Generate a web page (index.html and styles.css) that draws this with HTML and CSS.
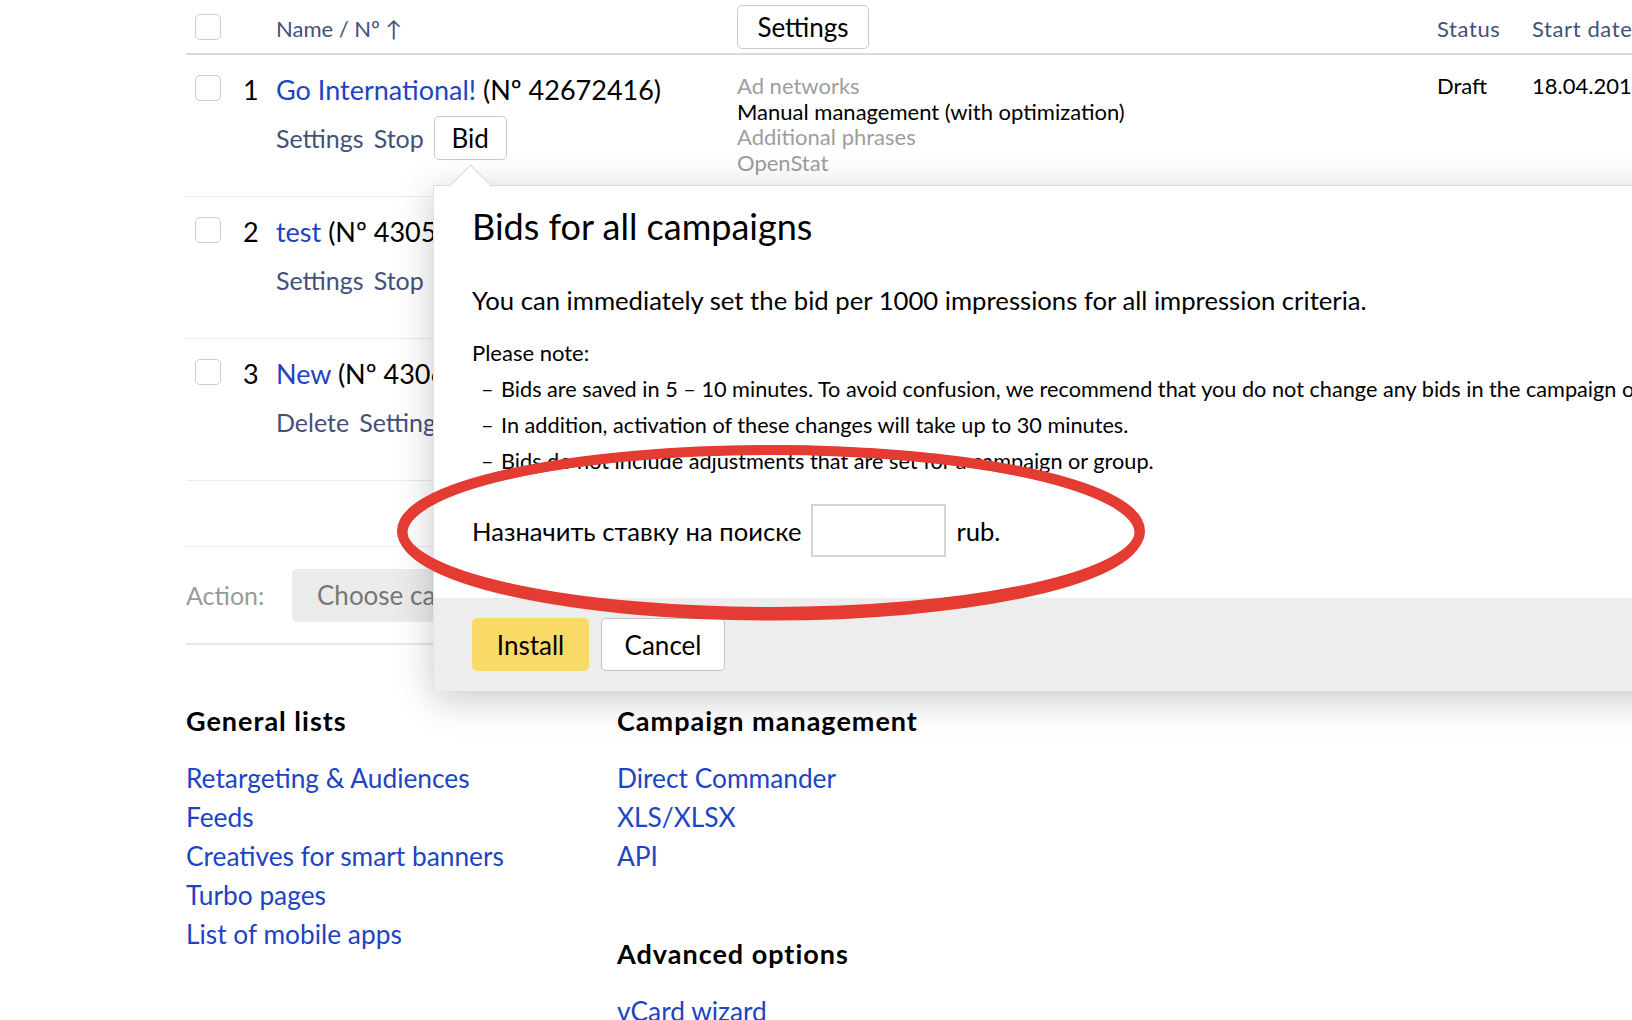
FILE: index.html
```html
<!DOCTYPE html>
<html lang="en">
<head>
<meta charset="utf-8">
<title>Campaigns</title>
<link rel="stylesheet" href="styles.css">
</head>
<body>
<div class="page">
  <div class="camp-table">
    <div class="trow thead">
      <div class="c-check"><span class="cb"></span></div>
      <div class="c-num"></div>
      <div class="c-name th">Name / Nº ↑</div>
      <div class="c-mid"><button class="btn btn-settings">Settings</button></div>
      <div class="c-status th th-wide">Status</div>
      <div class="c-date th th-wide">Start date</div>
    </div>

    <div class="trow item">
      <div class="c-check"><span class="cb cb-row"></span></div>
      <div class="c-num num">1</div>
      <div class="c-name">
        <div class="title"><a class="link">Go International!</a> (Nº 42672416)</div>
        <div class="actions"><span class="act">Settings</span><span class="act">Stop</span><button class="btn btn-bid">Bid</button></div>
      </div>
      <div class="c-mid meta">
        <div class="muted">Ad networks</div>
        <div>Manual management (with optimization)</div>
        <div class="muted">Additional phrases</div>
        <div class="muted">OpenStat</div>
      </div>
      <div class="c-status meta">Draft</div>
      <div class="c-date meta">18.04.2019</div>
    </div>

    <div class="trow item">
      <div class="c-check"><span class="cb cb-row"></span></div>
      <div class="c-num num">2</div>
      <div class="c-name">
        <div class="title"><a class="link">test</a> (Nº 43059210)</div>
        <div class="actions"><span class="act">Settings</span><span class="act">Stop</span><button class="btn btn-bid">Bid</button></div>
      </div>
      <div class="c-mid meta">
        <div class="muted">Ad networks</div>
        <div>Manual management (with optimization)</div>
      </div>
      <div class="c-status meta">Draft</div>
      <div class="c-date meta">18.04.2019</div>
    </div>

    <div class="trow item">
      <div class="c-check"><span class="cb cb-row"></span></div>
      <div class="c-num num">3</div>
      <div class="c-name">
        <div class="title"><a class="link">New</a> (Nº 43061187)</div>
        <div class="actions"><span class="act">Delete</span><span class="act">Settings</span><span class="act">Start</span></div>
      </div>
      <div class="c-mid meta">
        <div class="muted">Search</div>
        <div>Manual management</div>
      </div>
      <div class="c-status meta">Draft</div>
      <div class="c-date meta">18.04.2019</div>
    </div>

    <div class="spacer"></div>

    <div class="action-row">
      <span class="action-label">Action:</span>
      <button class="choose">Choose campaign</button>
    </div>
  </div>

  <div class="links">
    <div class="links-col">
      <h3 class="links-h">General lists</h3>
      <a class="flink">Retargeting &amp; Audiences</a>
      <a class="flink">Feeds</a>
      <a class="flink">Creatives for smart banners</a>
      <a class="flink">Turbo pages</a>
      <a class="flink">List of mobile apps</a>
    </div>
    <div class="links-col">
      <h3 class="links-h">Campaign management</h3>
      <a class="flink">Direct Commander</a>
      <a class="flink">XLS/XLSX</a>
      <a class="flink">API</a>
      <h3 class="links-h sec2">Advanced options</h3>
      <a class="flink">vCard wizard</a>
    </div>
  </div>
</div>

<div class="modal">
  <span class="tail"></span>
  <div class="modal-body">
    <h2 class="modal-title">Bids for all campaigns</h2>
    <p class="modal-lead">You can immediately set the bid per 1000 impressions for all impression criteria.</p>
    <div class="note">Please note:</div>
    <ul class="note-list">
      <li><span class="dash">–</span>Bids are saved in 5 – 10 minutes. To avoid confusion, we recommend that you do not change any bids in the campaign or group during this time.</li>
      <li><span class="dash">–</span>In addition, activation of these changes will take up to 30 minutes.</li>
      <li><span class="dash">–</span>Bids do not include adjustments that are set for a campaign or group.</li>
    </ul>
    <div class="bid-row">
      <span>Назначить ставку на поиске</span>
      <input class="bid-input" type="text">
      <span>rub.</span>
    </div>
  </div>
  <div class="modal-foot">
    <button class="btn-install">Install</button>
    <button class="btn-cancel">Cancel</button>
  </div>
</div>

<svg class="annot" width="1632" height="1020" viewBox="0 0 1632 1020">
  <ellipse cx="771" cy="531" rx="369" ry="81" fill="none" stroke="#e43b32" stroke-width="10"/>
  <ellipse cx="771" cy="533" rx="368" ry="83" fill="none" stroke="#e43b32" stroke-width="9"/>
</svg>
</body>
</html>
```

FILE: styles.css
```css
* { box-sizing: border-box; }
html, body { margin: 0; padding: 0; }
body {
  width: 1632px;
  height: 1020px;
  overflow: hidden;
  position: relative;
  background: #fff;
  font-family: Lato, "Liberation Sans", sans-serif;
  color: #000;
}
button, input { font-family: inherit; }

.page { padding-left: 186px; width: 1700px; }

.trow {
  display: grid;
  grid-template-columns: 57px 33px 461px 700px 95px 250px;
}
.thead {
  height: 55px;
  border-bottom: 2px solid #d7dae3;
  align-items: center;
}
.th { font-size: 22px; color: #44507a; padding-top: 3px; }
.th-wide { letter-spacing: 0.6px; }

.cb {
  display: block;
  width: 26px;
  height: 26px;
  margin-left: 9px;
  border: 1.5px solid #cbcbcb;
  border-radius: 5px;
  background: #fff;
}
.cb-row { margin-top: 3px; }

.btn {
  background: #fff;
  border: 1px solid #c9c9c9;
  border-radius: 5px;
  color: #000;
  font-size: 26px;
  padding: 0;
}
.btn-settings { width: 132px; height: 44px; }
.btn-bid { width: 73px; height: 44px; }

.item {
  height: 142px;
  border-bottom: 1px solid #ebebf0;
  padding-top: 17px;
  align-items: start;
}
.num, .title { font-size: 27px; line-height: 36px; }
.title { white-space: nowrap; }
.link { color: #1d44c2; text-decoration: none; }
.actions {
  display: flex;
  align-items: center;
  height: 44px;
  margin-top: 8px;
}
.act { font-size: 25px; color: #44507a; margin-right: 10px; }

.meta { font-size: 22px; line-height: 25.5px; margin-top: 1px; white-space: nowrap; }
.muted { color: #9d9d9d; }

.spacer { height: 66px; border-bottom: 1px solid #ebebf0; }

.action-row {
  display: flex;
  align-items: center;
  height: 98px;
  width: 1446px;
  border-bottom: 2px solid #e6e6ea;
}
.action-label { width: 106px; font-size: 25px; color: #9a9a9a; }
.choose {
  height: 53px;
  padding: 0 25px;
  background: #ebebeb;
  border: none;
  border-radius: 5px;
  font-size: 26px;
  color: #777;
}

.links {
  display: grid;
  grid-template-columns: 431px 1fr;
  padding-top: 58px;
}
.links-h {
  font-size: 27px;
  font-weight: 700;
  letter-spacing: 1px;
  line-height: 36px;
  margin: 0 0 20px;
}
.sec2 { margin-top: 60px; margin-bottom: 20px; }
.flink {
  display: block;
  font-size: 26.3px;
  line-height: 39px;
  color: #1d44c2;
  text-decoration: none;
}

.modal {
  position: absolute;
  left: 433px;
  top: 185px;
  width: 1400px;
  background: #fff;
  border-top: 1px solid #dcdcdc;
  border-left: 1px solid #e2e2e2;
  box-shadow: 0 8px 36px rgba(0, 0, 0, 0.22);
}
.tail {
  position: absolute;
  left: 21px;
  top: -15px;
  width: 31px;
  height: 31px;
  background: #fff;
  border-top: 1px solid #d9d9d9;
  border-left: 1px solid #d9d9d9;
  transform: rotate(45deg);
}
.modal-body {
  position: relative;
  height: 412px;
  padding: 20px 38px 0;
}
.modal-title { font-size: 36px; line-height: 40px; font-weight: 400; margin: 0; }
.modal-lead { font-size: 25.7px; line-height: 36px; margin: 36px 0 0; white-space: nowrap; }
.note { font-size: 22px; line-height: 36px; margin-top: 17px; }
.note-list {
  list-style: none;
  margin: 0;
  padding: 0 0 0 9px;
  font-size: 21.7px;
  line-height: 36px;
  white-space: nowrap;
}
.dash { display: inline-block; width: 20px; }
.bid-row {
  display: flex;
  align-items: center;
  height: 53px;
  margin-top: 25px;
  font-size: 25.6px;
}
.bid-input {
  width: 135px;
  height: 53px;
  margin: 0 10px;
  border: 2px solid #d4d4d4;
  background: #fff;
}
.modal-foot {
  display: flex;
  gap: 12px;
  height: 93px;
  padding: 20px 38px;
  background: #ededed;
}
.btn-install {
  width: 117px;
  height: 53px;
  background: #f9da66;
  border: none;
  border-radius: 5px;
  font-size: 26px;
  color: #000;
}
.btn-cancel {
  width: 124px;
  height: 53px;
  background: #fff;
  border: 1.5px solid #c4c4c4;
  border-radius: 5px;
  font-size: 26px;
  color: #000;
}

.annot {
  position: absolute;
  left: 0;
  top: 0;
  pointer-events: none;
}
```
